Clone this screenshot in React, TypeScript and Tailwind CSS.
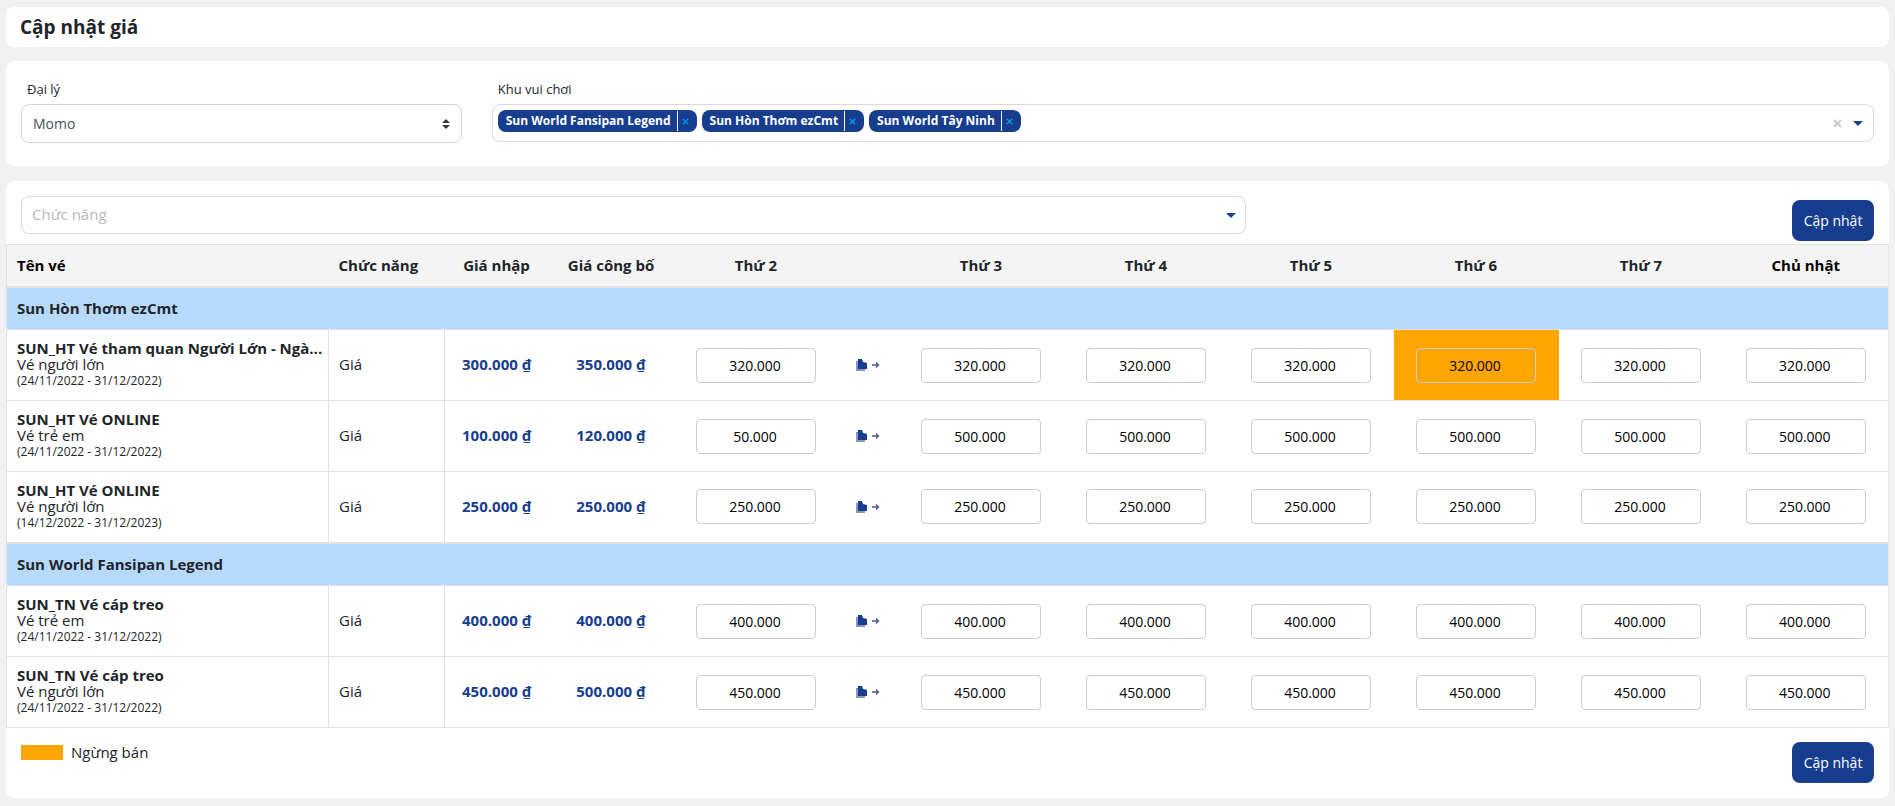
import { useState } from "react";
import { clsx } from "clsx";

type Ticket = {
  id: string;
  name: string;
  audience: string;
  period: string;
  cost: string;
  listed: string;
  prices: string[];
  stopped?: number;
};

type Park = {
  name: string;
  tickets: Ticket[];
};

const days = ["Thứ 2", "Thứ 3", "Thứ 4", "Thứ 5", "Thứ 6", "Thứ 7", "Chủ nhật"];

const week = (price: string, monday = price) => [monday, price, price, price, price, price, price];

const parks: Park[] = [
  {
    name: "Sun Hòn Thơm ezCmt",
    tickets: [
      {
        id: "ht-1",
        name: "SUN_HT Vé tham quan Người Lớn - Ngà...",
        audience: "Vé người lớn",
        period: "(24/11/2022 - 31/12/2022)",
        cost: "300.000",
        listed: "350.000",
        prices: week("320.000"),
        stopped: 4,
      },
      {
        id: "ht-2",
        name: "SUN_HT Vé ONLINE",
        audience: "Vé trẻ em",
        period: "(24/11/2022 - 31/12/2022)",
        cost: "100.000",
        listed: "120.000",
        prices: week("500.000", "50.000"),
      },
      {
        id: "ht-3",
        name: "SUN_HT Vé ONLINE",
        audience: "Vé người lớn",
        period: "(14/12/2022 - 31/12/2023)",
        cost: "250.000",
        listed: "250.000",
        prices: week("250.000"),
      },
    ],
  },
  {
    name: "Sun World Fansipan Legend",
    tickets: [
      {
        id: "tn-1",
        name: "SUN_TN Vé cáp treo",
        audience: "Vé trẻ em",
        period: "(24/11/2022 - 31/12/2022)",
        cost: "400.000",
        listed: "400.000",
        prices: week("400.000"),
      },
      {
        id: "tn-2",
        name: "SUN_TN Vé cáp treo",
        audience: "Vé người lớn",
        period: "(24/11/2022 - 31/12/2022)",
        cost: "450.000",
        listed: "500.000",
        prices: week("450.000"),
      },
    ],
  },
];

function Caret({ className }: { className?: string }) {
  return (
    <svg viewBox="0 0 10 5" className={clsx("h-[5px] w-[10px] fill-[#173d8f]", className)} aria-hidden="true">
      <path d="M0 0h10L5 5z" />
    </svg>
  );
}

function Cross({ className }: { className?: string }) {
  return (
    <svg viewBox="0 0 8 8" className={clsx("fill-none stroke-current", className)} aria-hidden="true">
      <path d="M1 1l6 6M7 1L1 7" />
    </svg>
  );
}

function CopyIcon() {
  return (
    <svg viewBox="0 0 24 12" className="h-3 w-6" aria-hidden="true">
      <path d="M0 2h2v8h7v2H0z" fill="#8f94b4" />
      <path d="M2 0h4l1 3 4 1v6H2z" fill="#173d8f" />
      <path d="M16 6h6.500M20 3.500L22.500 6 20 8.500" fill="none" stroke="#4d5a78" strokeWidth="1.300" />
    </svg>
  );
}

function UpdateButton() {
  return (
    <button type="button" className="h-[41px] w-[82px] rounded-lg bg-[#173d8f] text-sm text-white">
      Cập nhật
    </button>
  );
}

function AgencyField() {
  return (
    <div className="w-1/4 px-[15px]">
      <label htmlFor="agency" className="block pl-1.5 text-[13px] leading-[18px]">
        Đại lý
      </label>
      <div className="relative mt-1.5">
        <select
          id="agency"
          className="h-[39px] w-full appearance-none rounded-lg border border-[#ced4da] bg-white px-[11px] text-sm text-[#495057]"
        >
          <option>Momo</option>
        </select>
        <svg
          viewBox="0 0 4 5"
          className="pointer-events-none absolute top-[15px] right-3 h-[10px] w-2 fill-[#343a40]"
          aria-hidden="true"
        >
          <path d="M2 0L0 2h4zm0 5L0 3h4z" />
        </svg>
      </div>
    </div>
  );
}

function ParkField() {
  const [selected, setSelected] = useState(["Sun World Fansipan Legend", "Sun Hòn Thơm ezCmt", "Sun World Tây Ninh"]);

  return (
    <div className="w-3/4 px-[15px]">
      <label htmlFor="park" className="block pl-1.5 text-[13px] leading-[18px]">
        Khu vui chơi
      </label>
      <div className="mt-1.5 flex h-[38px] rounded-lg border border-[#d9d9d9] pl-[5px]">
        <div className="flex flex-1 gap-[5px] pt-[5px]">
          {selected.map((park) => (
            <span
              key={park}
              className="flex h-[22px] items-center overflow-hidden rounded-lg bg-[#173d8f] text-xs font-bold text-white"
            >
              <span className="pr-1.5 pl-2">{park}</span>
              <button
                type="button"
                aria-label={`Xóa ${park}`}
                onClick={() => setSelected(selected.filter((name) => name !== park))}
                className="flex h-5 w-5 items-center justify-center border-l border-white pr-1 text-[#08a0f0]"
              >
                <Cross className="size-[7px] stroke-[1.5]" />
              </button>
            </span>
          ))}
          <input id="park" type="text" className="h-[22px] min-w-0 flex-1 outline-none" />
        </div>
        <button type="button" aria-label="Xóa tất cả" className="px-[3px] text-[#ccc]" onClick={() => setSelected([])}>
          <Cross className="size-[9px] stroke-2" />
        </button>
        <button type="button" aria-label="Mở danh sách" className="pr-2.5 pl-2">
          <Caret />
        </button>
      </div>
    </div>
  );
}

function TicketRow({ ticket }: { ticket: Ticket }) {
  return (
    <tr className="h-[71px] border-b border-[#dee2e6]">
      <td className="border-r border-[#dee2e6] pl-2.5 whitespace-nowrap">
        <p className="leading-4 font-bold">{ticket.name}</p>
        <p className="leading-4">{ticket.audience}</p>
        <p className="text-xs leading-[18px]">{ticket.period}</p>
      </td>
      <td className="border-r border-[#dee2e6] px-2.5">Giá</td>
      <td className="text-center font-bold text-[#173d8f]">{ticket.cost} ₫</td>
      <td className="text-center font-bold text-[#173d8f]">{ticket.listed} ₫</td>
      {ticket.prices.map((price, i) => [
        <td key={days[i]} className={clsx("text-center", ticket.stopped === i && "bg-[#ffa500]")}>
          <input
            type="text"
            aria-label={`${ticket.name} ${days[i]}`}
            defaultValue={price}
            className="h-[35px] w-[120px] rounded border border-[#ccc] pr-0.5 text-center text-sm text-black"
          />
        </td>,
        i === 0 && (
          <td key="copy" className="pr-0.5 pb-0.5 text-center">
            <button type="button" aria-label="Sao chép giá" className="align-middle">
              <CopyIcon />
            </button>
          </td>
        ),
      ])}
    </tr>
  );
}

function PriceTable() {
  return (
    <table className="w-full table-fixed border-collapse border border-[#dee2e6] text-[15px]">
      <colgroup>
        <col className="w-[322px]" />
        <col className="w-[116px]" />
        <col className="w-[104px]" />
        <col className="w-[125px]" />
        <col className="w-[165px]" />
        <col className="w-[60px]" />
        <col span={6} />
      </colgroup>
      <thead>
        <tr className="h-[42px] border-b-2 border-[#dee2e6] bg-[#f4f4f4]">
          <th className="px-2.5 text-left text-black">Tên vé</th>
          <th className="px-2.5 text-left">Chức năng</th>
          <th>Giá nhập</th>
          <th>Giá công bố</th>
          {days.map((day, i) => [
            <th key={day} className={clsx(i === 6 && "text-black")}>
              {day}
            </th>,
            i === 0 && <td key="copy" />,
          ])}
        </tr>
      </thead>
      {parks.map((park) => (
        <tbody key={park.name}>
          <tr className="h-[43px] border-t-2 border-b border-[#dee2e6] bg-[#b8daff]">
            <th colSpan={12} className="px-2.5 text-left">
              {park.name}
            </th>
          </tr>
          {park.tickets.map((ticket) => (
            <TicketRow key={ticket.id} ticket={ticket} />
          ))}
        </tbody>
      ))}
    </table>
  );
}

export default function App() {
  return (
    <main className="min-h-screen bg-[#f1f1f1] px-1.5 pt-[7px] pb-2 font-['Open_Sans','Noto_Sans',sans-serif] text-sm text-[#212529]">
      <header className="rounded-lg bg-white px-3.5 py-2">
        <h1 className="text-[19px] leading-6 font-bold">Cập nhật giá</h1>
      </header>

      {/* Filters */}
      <section className="mt-3.5 flex rounded-lg bg-white pt-[19px] pb-[23px]">
        <AgencyField />
        <ParkField />
      </section>

      {/* Price list */}
      <section className="mt-[15px] rounded-lg bg-white">
        <div className="flex items-start justify-between pt-[15px] pb-[3px]">
          <div className="w-2/3 px-[15px]">
            <div className="relative">
              <select
                aria-label="Chức năng"
                defaultValue=""
                className="h-[38px] w-full appearance-none rounded-lg border border-[#d9d9d9] bg-white px-2.5 text-[15px] text-[#b8b8b8]"
              >
                <option value="">Chức năng</option>
                <option value="price">Giá</option>
              </select>
              <Caret className="pointer-events-none absolute top-[17px] right-2.5" />
            </div>
          </div>
          <div className="flex px-[15px] pt-1">
            <UpdateButton />
          </div>
        </div>

        <PriceTable />

        <footer className="flex items-start justify-between px-[15px] pt-3.5 pb-[15px]">
          <div className="flex items-center gap-2">
            <span className="h-[15px] w-[42px] bg-[#ffa500]" />
            <span className="text-[15px] leading-5">Ngừng bán</span>
          </div>
          <UpdateButton />
        </footer>
      </section>
    </main>
  );
}
